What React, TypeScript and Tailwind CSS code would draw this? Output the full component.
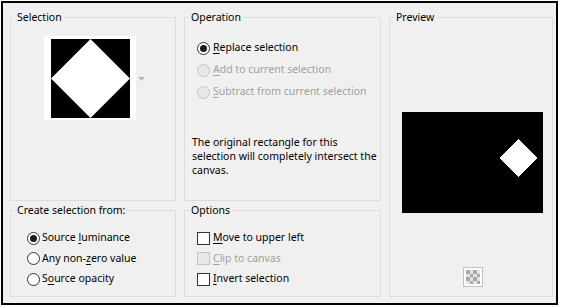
import type { ReactNode } from "react";

interface GroupBoxProps {
  title: string;
  className?: string;
  children: ReactNode;
}

function GroupBox({ title, className, children }: GroupBoxProps) {
  return (
    <fieldset className={`m-0 min-w-0 border border-[#dcdcdc] p-0 ${className ?? ""}`}>
      <legend className="ml-[4px] px-[2px] leading-[14px]">{title}</legend>
      {children}
    </fieldset>
  );
}

function Radio({ checked, disabled, children }: { checked?: boolean; disabled?: boolean; children: ReactNode }) {
  return (
    <div className={`flex h-[22px] items-center gap-[3px] ${disabled ? "text-[#a0a0a0]" : ""}`}>
      <span
        className={`grid h-[13px] w-[13px] place-items-center rounded-full border ${
          disabled ? "border-[#c4c4c4] bg-[#e8e8e8]" : "border-[#333333] bg-white"
        }`}
      >
        {checked && <span className="h-[7px] w-[7px] rounded-full bg-[#1a1a1a]" />}
      </span>
      <span>{children}</span>
    </div>
  );
}

function Check({ disabled, children }: { disabled?: boolean; children: ReactNode }) {
  return (
    <div className={`flex h-[21px] items-center gap-[3px] ${disabled ? "text-[#a0a0a0]" : ""}`}>
      <span className={`h-[13px] w-[13px] border ${disabled ? "border-[#c4c4c4] bg-[#e8e8e8]" : "border-[#333333] bg-white"}`} />
      <span>{children}</span>
    </div>
  );
}

function Key({ children }: { children: ReactNode }) {
  return <span className="underline underline-offset-2">{children}</span>;
}

export default function App() {
  return (
    <div className="h-[307px] w-[563px] bg-white p-px font-['Noto_Sans',sans-serif] text-[10.5px] text-black">
      <div className="grid h-[304px] w-[557px] grid-cols-[166px_197px_164px] grid-rows-[191px_94px] gap-x-[8px] gap-y-[2px] border-2 border-black bg-[#f0f0f0] pl-[7px] pt-[7px]">
        <GroupBox title="Selection" className="col-start-1 row-start-1">
          <div className="ml-[33px] mt-[12px] flex items-center">
            <div className="flex h-[84px] w-[92px] items-center justify-center bg-white">
              <svg width="79" height="79" viewBox="0 0 79 79">
                <rect width="79" height="79" fill="#000" />
                <polygon points="39.5,0 79,39.5 39.5,79 0,39.5" fill="#fff" />
              </svg>
            </div>
            <svg className="ml-[2px] mt-px" width="7" height="4" viewBox="0 0 7 4">
              <polygon points="0,0 7,0 3.5,4" fill="#b8b8b8" />
            </svg>
          </div>
        </GroupBox>

        <GroupBox title="Operation" className="col-start-2 row-start-1">
          <div className="mt-[13px] pl-[12px]">
            <Radio checked>
              <Key>R</Key>eplace selection
            </Radio>
            <Radio disabled>
              <Key>A</Key>dd to current selection
            </Radio>
            <Radio disabled>
              <Key>S</Key>ubtract from current selection
            </Radio>
          </div>
          <p className="mt-[32px] pl-[7px] leading-[14px]">
            The original rectangle for this
            <br />
            selection will completely intersect the
            <br />
            canvas.
          </p>
        </GroupBox>

        <GroupBox title="Preview" className="col-start-3 row-span-2 row-start-1">
          <div className="ml-[12px] mt-[88px] h-[101px] w-[141px] bg-black">
            <svg width="141" height="101" viewBox="0 0 141 101" shapeRendering="crispEdges">
              <polygon points="116,27 135,46 116,65 97,46" fill="#fff" />
            </svg>
          </div>
          <div className="ml-[73px] mt-[54px] h-[20px] w-[20px] border border-[#c0c0c0] bg-white p-[2px]">
            <svg width="14" height="14" viewBox="0 0 14 14" shapeRendering="crispEdges">
              <rect width="14" height="14" fill="#e4e4e4" />
              {[0, 1, 2, 3].map((r) =>
                [0, 1, 2, 3].map((c) =>
                  (r + c) % 2 === 0 ? <rect key={`${r}-${c}`} x={c * 3.5} y={r * 3.5} width="3.5" height="3.5" fill="#a8a8a8" /> : null
                )
              )}
            </svg>
          </div>
        </GroupBox>

        <GroupBox title="Create selection from:" className="col-start-1 row-start-2">
          <div className="mt-[11px] pl-[16px] [&>div]:h-[20.5px] [&>div]:gap-[2px]">
            <Radio checked>
              Source <Key>l</Key>uminance
            </Radio>
            <Radio>
              Any non-<Key>z</Key>ero value
            </Radio>
            <Radio>
              S<Key>o</Key>urce opacity
            </Radio>
          </div>
        </GroupBox>

        <GroupBox title="Options" className="col-start-2 row-start-2">
          <div className="mt-[11px] pl-[12px] [&>div]:h-[20.5px]">
            <Check>
              <Key>M</Key>ove to upper left
            </Check>
            <Check disabled>
              <Key>C</Key>lip to canvas
            </Check>
            <Check>
              <Key>I</Key>nvert selection
            </Check>
          </div>
        </GroupBox>
      </div>
    </div>
  );
}
